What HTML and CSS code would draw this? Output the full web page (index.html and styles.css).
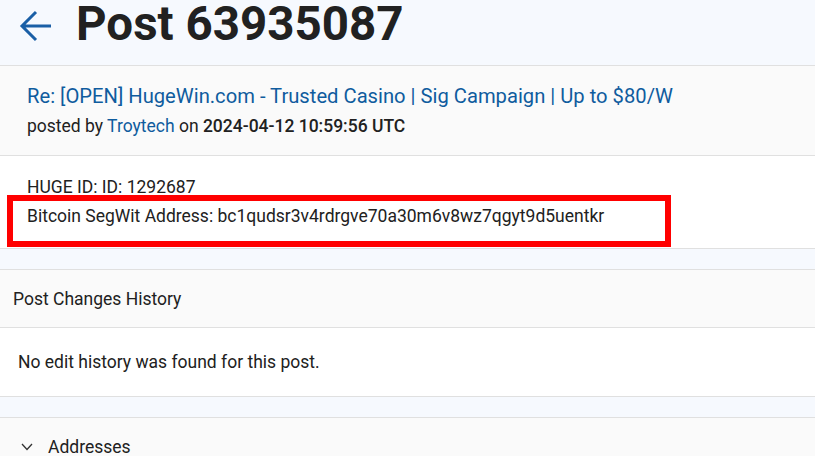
FILE: index.html
```html
<!DOCTYPE html>
<html>
<head>
    <title>Post 63935087</title>
    <link rel="stylesheet" href="styles.css">
</head>
<body>
  <div class="page-header">
    <a class="back" href="#">
      <svg width="34" height="34" viewBox="0 0 34 34">
        <path d="M32 17H3M17 3L3 17L17 31" fill="none" stroke="#1a5fa6" stroke-width="3"/>
      </svg>
    </a>
    <h1>Post 63935087</h1>
  </div>

  <div class="card">
    <div class="post-head">
      <a class="post-title" href="#">Re: [OPEN] HugeWin.com - Trusted Casino | Sig Campaign | Up to $80/W</a>
      <div class="post-meta">posted by <a href="#">Troytech</a> on <b>2024-04-12 10:59:56 UTC</b></div>
    </div>
    <div class="post-body">
      <div class="line">HUGE ID: ID: 1292687</div>
      <div class="marked">Bitcoin SegWit Address: bc1qudsr3v4rdrgve70a30m6v8wz7qgyt9d5uentkr</div>
    </div>
  </div>

  <div class="card">
    <div class="card-head">Post Changes History</div>
    <div class="card-body">No edit history was found for this post.</div>
  </div>

  <div class="card">
    <div class="card-head toggle">
      <svg class="chev" width="12" height="8" viewBox="0 0 12 8">
        <path d="M1 1L6 6.5L11 1" fill="none" stroke="#333" stroke-width="1.3"/>
      </svg>
      Addresses
    </div>
  </div>
</body>
</html>
```

FILE: styles.css
```css
body {
    margin: 0;
    font-family: Roboto, "Liberation Sans", sans-serif;
    font-size: 17.5px;
    color: #212121;
    background-color: #f6f9fe;
}
a {
    color: #0f5c9e;
    text-decoration: none;
}
.page-header {
    height: 65px;
    display: flex;
    align-items: flex-start;
    border-bottom: 1px solid #e0e0e0;
}
.back {
    margin: 9px 0 0 19px;
    height: 34px;
}
h1 {
    margin: -8px 0 0 23px;
    font-size: 47.5px;
    line-height: 64px;
    font-weight: bold;
    color: #212121;
}
.card {
    background-color: #fafafa;
    border-bottom: 1px solid #e0e0e0;
    margin-bottom: 20px;
}
.card + .card {
    border-top: 1px solid #e0e0e0;
}
.post-head {
    padding: 18px 27px 19px;
    border-bottom: 1px solid #e0e0e0;
}
.post-title {
    display: block;
    font-size: 20.2px;
    line-height: 24px;
}
.post-meta {
    margin-top: 8px;
    line-height: 20px;
}
.post-meta b {
    font-weight: 500;
}
.post-body {
    background-color: #fff;
    padding: 21px 0 1px 0;
}
.post-body .line {
    padding-left: 27px;
    line-height: 20px;
}
.post-body .marked {
    margin: -2px 0 0 7px;
    padding: 5px 0 0 14px;
    width: 664px;
    height: 52px;
    border: 6px solid #ff0000;
    box-sizing: border-box;
    line-height: 20px;
}
.card-head {
    padding: 0 13px;
    height: 57px;
    display: flex;
    align-items: center;
    border-bottom: 1px solid #e0e0e0;
}
.card-body {
    background-color: #fff;
    padding: 0 18px;
    height: 68px;
    display: flex;
    align-items: center;
}
.toggle {
    padding-left: 21px;
    border-bottom: none;
}
.chev {
    margin-right: 15px;
}
```
